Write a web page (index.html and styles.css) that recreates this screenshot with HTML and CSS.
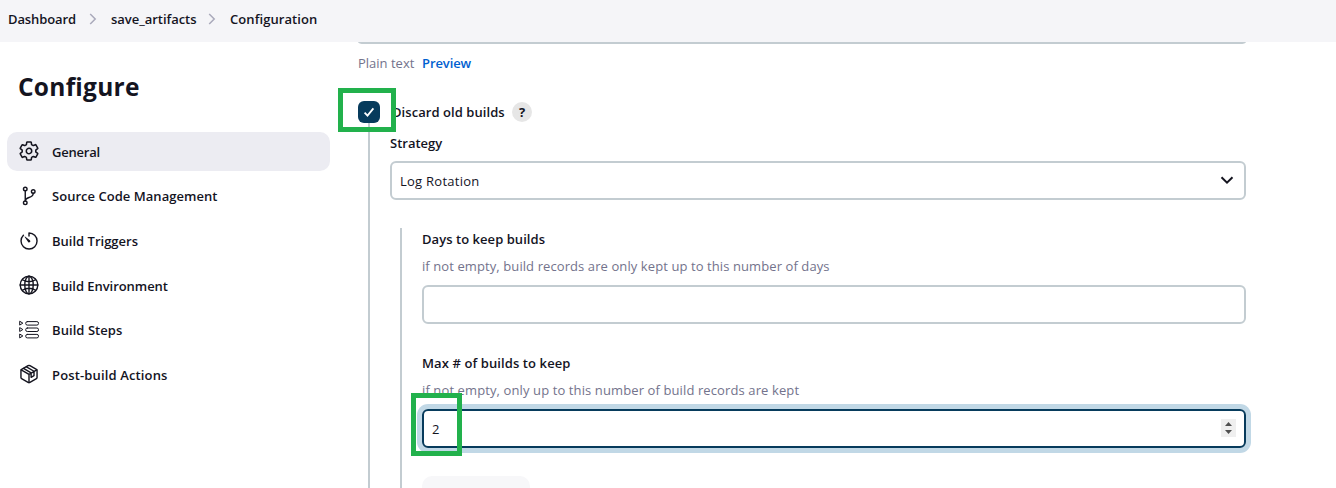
FILE: index.html
```html
<!DOCTYPE html>
<html lang="en">
<head>
<meta charset="utf-8">
<title>Configuration</title>
<link rel="stylesheet" href="styles.css">
</head>
<body>
<header class="crumbs">
  <span class="crumb c1">Dashboard</span>
  <svg class="sep" viewBox="0 0 8 12"><path d="M1.2 1l5 5-5 5"/></svg>
  <span class="crumb c2">save_artifacts</span>
  <svg class="sep sep2" viewBox="0 0 8 12"><path d="M1.2 1l5 5-5 5"/></svg>
  <span class="crumb c3">Configuration</span>
</header>
<div class="page">
  <nav class="side">
    <h1><span>Configure</span></h1>
    <a class="item active"><svg class="icon" viewBox="20 20 472 472"><path d="M262.29 192.31a64 64 0 1 0 57.4 57.4 64.13 64.13 0 0 0-57.4-57.4zM416.39 256a154.34 154.34 0 0 1-1.53 20.79l45.21 35.46a10.81 10.81 0 0 1 2.45 13.75l-42.77 74a10.81 10.81 0 0 1-13.14 4.59l-44.9-18.08a16.11 16.11 0 0 0-15.17 1.75A164.48 164.48 0 0 1 325 400.8a15.94 15.94 0 0 0-8.82 12.14l-6.73 47.89a11.08 11.08 0 0 1-10.68 9.17h-85.54a11.11 11.11 0 0 1-10.69-8.87l-6.72-47.82a16.07 16.07 0 0 0-9-12.22 155.3 155.3 0 0 1-21.46-12.57 16 16 0 0 0-15.11-1.71l-44.89 18.07a10.81 10.81 0 0 1-13.14-4.58l-42.77-74a10.8 10.8 0 0 1 2.45-13.75l38.21-30a16.05 16.05 0 0 0 6-14.08c-.36-4.17-.58-8.33-.58-12.5s.21-8.27.58-12.35a16 16 0 0 0-6.07-13.94l-38.19-30A10.81 10.81 0 0 1 49.48 186l42.77-74a10.81 10.81 0 0 1 13.14-4.59l44.9 18.08a16.11 16.11 0 0 0 15.17-1.75A164.48 164.48 0 0 1 187 111.2a15.94 15.94 0 0 0 8.82-12.14l6.73-47.89A11.08 11.08 0 0 1 213.23 42h85.54a11.11 11.11 0 0 1 10.69 8.87l6.72 47.82a16.07 16.07 0 0 0 9 12.22 155.3 155.3 0 0 1 21.46 12.57 16 16 0 0 0 15.11 1.71l44.89-18.07a10.81 10.81 0 0 1 13.14 4.58l42.77 74a10.8 10.8 0 0 1-2.45 13.75l-38.21 30a16.05 16.05 0 0 0-6.05 14.08c.33 4.14.55 8.3.55 12.47z"/></svg><span class="t1">General</span></a>
    <a class="item"><svg class="icon" viewBox="0 0 512 512"><circle cx="160" cy="76" r="46"/><circle cx="160" cy="430" r="46"/><circle cx="364" cy="140" r="46"/><path d="M160 384V122M364 186c0 150-204 70-204 198"/></svg><span class="t2">Source Code Management</span></a>
    <a class="item"><svg class="icon low" viewBox="0 0 512 512"><path d="M112.9 108.5A204 204 0 0 0 52 256c0 114 94 204 206 204a204 204 0 0 0 204-204c0-113-92-204-206-206v80"/><path class="solid" d="M233.4 278.6l-88-128c-5-8 2-15 9-9l124 92a32 32 0 1 1-45 45z"/></svg><span class="t3">Build Triggers</span></a>
    <a class="item"><svg class="icon" viewBox="0 0 512 512"><circle cx="256" cy="256" r="226"/><ellipse cx="256" cy="256" rx="108" ry="226"/><path d="M256 30v452M30 256h452M90 122c46 34 102 50 166 50s120-16 166-50M90 390c46-34 102-50 166-50s120 16 166 50"/></svg><span class="t4">Build Environment</span></a>
    <a class="item"><svg class="icon thin low" viewBox="0 0 20 20"><rect x="6.7" y="1.6" width="12.8" height="3.5" rx="1.6"/><rect x="6.7" y="8" width="12.8" height="3.5" rx="1.6"/><rect x="6.7" y="14.4" width="12.8" height="3.5" rx="1.6"/><path d="M.7 1.6v3.5l2.8-1.75zM.7 8v3.5l2.8-1.75zM.7 14.4v3.5l2.8-1.75z"/></svg><span class="t5">Build Steps</span></a>
    <a class="item"><svg class="icon" viewBox="0 0 512 512"><path d="M462 345V167a32 32 0 0 0-16-28L280 44a48 48 0 0 0-48 0L66 139a32 32 0 0 0-16 28v178a32 32 0 0 0 16 28l166 95a48 48 0 0 0 48 0l166-95a32 32 0 0 0 16-28z"/><path d="M56 150l200 116 200-116M256 472V266M116 114l194 114v112l74-42V186L192 72"/></svg><span class="t6">Post-build Actions</span></a>
  </nav>
  <main class="main">
    <div class="area-end"></div>
    <div class="format"><span class="plain">Plain text</span><span class="preview">Preview</span></div>
    <div class="option">
      <span class="check"><svg viewBox="0 0 22 22"><path d="M6.6 11.6l2.9 3 5.9-7.2"/></svg><i class="mark mark-check"></i></span>
      <span class="label discard">Discard old builds</span>
      <span class="help">?</span>
    </div>
    <section class="nested">
      <div class="label strategy"><span>Strategy</span></div>
      <div class="field select"><span class="rotation">Log Rotation</span><svg viewBox="0 0 14 8"><path d="M1.5 1.2L7 6.6l5.5-5.4"/></svg></div>
      <section class="inner">
        <div class="label days"><span>Days to keep builds</span></div>
        <div class="hint h1t"><span>if not empty, build records are only kept up to this number of days</span></div>
        <div class="field"></div>
        <div class="label max"><span>Max # of builds to keep</span></div>
        <div class="hint h2t"><span>if not empty, only up to this number of build records are kept</span></div>
        <div class="field focus"><span>2</span><span class="spin"><svg viewBox="0 0 15 18"><path d="M4 7h7L7.5 3zM4 11h7l-3.5 4z"/></svg></span><i class="mark mark-num"></i></div>
        <div class="button"></div>
      </section>
    </section>
  </main>
</div>
</body>
</html>
```
FILE: styles.css
```css
* { box-sizing: border-box; }
body { margin: 0; height: 488px; overflow: hidden; background: #fff; color: #14141f; font: 13px/20px "Open Sans", "Noto Sans", sans-serif; }
span { white-space: nowrap; }
.crumbs { height: 42px; padding: 0 8px 4px; display: flex; align-items: center; background: #f5f5f8; font-weight: 600; }
.crumb { flex: none; }
.c1 { width: 81px; letter-spacing: -.1px; }
.c2 { width: 97px; margin-left: 14px; letter-spacing: -.03px; }
.c3 { margin-left: 14px; letter-spacing: .08px; }
.sep { width: 8px; height: 12px; fill: none; stroke: #a9a9bb; stroke-width: 1.5; }
.page { display: flex; height: 446px; overflow: hidden; }
.side { width: 358px; flex: none; padding: 25px 28px 0 7px; }
.side h1 { margin: 0 0 25px; padding-left: 11px; font-size: 24.5px; line-height: 40px; font-weight: 700; letter-spacing: .25px; }
.item { display: flex; align-items: center; height: 39px; margin-bottom: 5.6px; padding-left: 12px; border-radius: 10px; font-weight: 600; width: 323px; }
.item span { padding-top: 1px; }
.item .t1 { letter-spacing: -.2px; }
.item .t2 { padding-top: 0; letter-spacing: .03px; }
.item .t4 { letter-spacing: -.05px; }
.item .t5 { letter-spacing: .06px; }
.item .t6 { letter-spacing: .14px; }
.active { background: #ececf2; }
.icon { width: 20px; height: 20px; margin: -1px 13px 0 0; overflow: visible; fill: none; stroke: #14141f; stroke-width: 36; stroke-linecap: round; stroke-linejoin: round; }
.low { margin-top: 1px; }
.thin { stroke-width: 1; }
.icon .solid { fill: #14141f; stroke: none; }
.main { width: 888px; display: flex; flex-direction: column; }
.area-end { flex: none; height: 2px; border-radius: 0 0 6px 6px / 0 0 2px 2px; background: #c3ccd1; }
.format { display: flex; flex: none; margin-top: 9px; height: 20px; color: #73738c; }
.plain { width: 64px; }
.preview { color: #0060d0; font-weight: 600; letter-spacing: -.1px; }
.option { display: flex; flex: none; align-items: center; height: 22px; margin-top: 28px; }
.check { position: relative; width: 22px; height: 22px; flex: none; border-radius: 6px; background: #073b5c; }
.check svg { display: block; fill: none; stroke: #fff; stroke-width: 1.8; }
.mark { position: absolute; z-index: 2; border: 5px solid #22b14c; }
.mark-check { left: -20px; top: -13px; width: 58px; height: 44px; }
.label { font-weight: 600; }
.discard { width: 112px; margin-left: 12px; margin-right: 8px; letter-spacing: .06px; }
.help { width: 20px; height: 20px; border-radius: 50%; background: #e6e6e6; text-align: center; font-weight: 700; }
.nested { margin-left: 10px; padding-left: 20px; border-left: 2px solid #c3ccd1; flex: 1; min-height: 0; display: flex; flex-direction: column; }
.strategy { margin-top: 10px; }
.field { position: relative; display: flex; align-items: center; justify-content: space-between; height: 39px; padding: 0 8px; border: 2px solid #c3ccd1; border-radius: 6px; flex: none; }
.select { margin-top: 8px; padding: 0 10px 0 8px; }
.rotation { letter-spacing: .25px; }
.select svg { width: 14px; height: 8px; margin-top: -2px; fill: none; stroke: #14141f; stroke-width: 2; }
.inner { margin: 28px 0 0 10px; padding: 1px 0 0 20px; border-left: 2px solid #c3ccd1; flex: 1; min-height: 0; }
.days { letter-spacing: .05px; }
.hint { margin: 7px 0 9px; color: #73738c; }
.h1t { letter-spacing: .09px; }
.h2t { letter-spacing: .11px; }
.max { margin-top: 29px; letter-spacing: .1px; }
.focus { border-color: #073b5c; box-shadow: 0 0 0 5px #c1d8e6; }
.spin { width: 15px; height: 18px; background: #efefef; margin-top: -2px; }
.spin svg { display: block; fill: #505050; }
.mark-num { left: -13px; top: -18px; width: 51px; height: 63px; }
.button { width: 108px; height: 12px; margin-top: 28px; border-radius: 10px 10px 0 0; background: #f7f7f9; }
```
